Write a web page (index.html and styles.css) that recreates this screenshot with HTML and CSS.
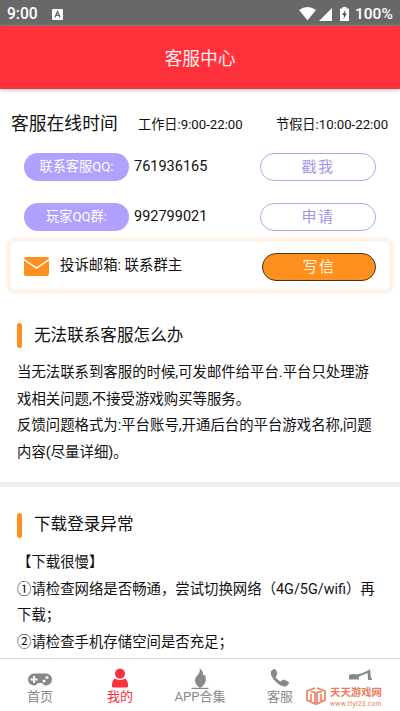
FILE: index.html
```html
<!DOCTYPE html>
<html lang="zh-CN">
<head>
<meta charset="utf-8">
<title>客服中心</title>
<link rel="stylesheet" href="styles.css">
</head>
<body>
<div class="app">
  <div class="status">
    <span class="clock">9:00</span>
    <svg class="ime" viewBox="0 0 11 11"><rect width="11" height="11" rx="1" fill="#fff"/><path d="M3 8.2 5.5 2.5 8 8.2M4 6.4h3" fill="none" stroke="#666" stroke-width="1.3"/></svg>
    <svg class="signals" viewBox="0 0 52 16"><path d="M0 4Q8.500-2 17 4L8.500 14.500Z" fill="#fff"/><path d="M33 2V15H20Z" fill="#fff"/><path d="M43.500 1h4v1.500h2.500V15h-9V2.500h2.500Z" fill="#fff"/><path d="m46.500 4-3.500 5h2l-.5 4 3.500-5.500h-2Z" fill="#555"/></svg>
    <span class="battery">100%</span>
  </div>
  <header class="header">客服中心</header>
  <main class="content">
    <div class="hours">
      <h1>客服在线时间</h1>
      <span class="weekday">工作日:9:00-22:00</span>
      <span>节假日:10:00-22:00</span>
    </div>
    <div class="contact">
      <span class="tag">联系客服QQ:</span><span class="number">761936165</span><button class="outline">戳我</button>
    </div>
    <div class="contact second">
      <span class="tag">玩家QQ群:</span><span class="number">992799021</span><button class="outline">申请</button>
    </div>
    <div class="mail">
      <svg class="envelope" viewBox="0 0 25 19"><rect width="25" height="19" rx="2" fill="#ff901f"/><path d="m0 2.500 12.500 8.500L25 2.500" fill="none" stroke="#fff" stroke-width="1.500"/></svg>
      <span class="mailtext">投诉邮箱: 联系群主</span><button class="write">写信</button>
    </div>
    <section class="faq">
      <h2><span>无法联系客服怎么办</span></h2>
      <p>当无法联系到客服的时候,可发邮件给平台.平台只处理游<br>戏相关问题,不接受游戏购买等服务。<br>反馈问题格式为:平台账号,开通后台的平台游戏名称,问题<br>内容(尽量详细)。</p>
    </section>
    <div class="divider"></div>
    <section class="faq login">
      <h2><span>下载登录异常</span></h2>
      <p>【下载很慢】<br>①请检查网络是否畅通，尝试切换网络（4G/5G/wifi）再<br>下载；<br>②请检查手机存储空间是否充足；</p>
    </section>
  </main>
  <nav class="tabs">
    <a class="tab"><svg viewBox="0 0 26 20"><path d="M7 4.500h12a6 6 0 0 1 0 12c-2 0-3-1.500-4-2.500h-4c-1 1-2 2.500-4 2.500a6 6 0 0 1 0-12Z" fill="#888"/><path d="M3.500 10.500h7M7 7v7" stroke="#fff" stroke-width="1.800"/><circle cx="17" cy="12" r="1.500" fill="#fff"/><circle cx="20" cy="8.500" r="1.500" fill="#fff"/></svg><span>首页</span></a>
    <a class="tab active"><svg viewBox="0 0 26 20"><circle cx="13" cy="4.800" r="5" fill="#fb303c"/><path d="M8 9.500q5 3 10 0 3 2 3 6V17q0 1.500-1.500 1.500h-13Q5 18.500 5 17v-1.500q0-4 3-6Z" fill="#fb303c"/></svg><span>我的</span></a>
    <a class="tab"><svg viewBox="0 0 26 20"><path d="M12.500-1q4.500 4 3.500 7.500l2-.5q2 6-1 9.500-1.500 2-4 3.500-5-3.500-5-7.500 0-3 3-6 2.500-3 1.500-6.500Z" fill="#888"/><path d="M4.500 19.400h17" stroke="#888" stroke-width="1.200"/></svg><span>APP合集</span></a>
    <a class="tab"><svg viewBox="0 0 26 20"><path d="m4 2 3-2q1-.5 2 1l1.500 4-2 3q2 3 5 4.500l3-2 4.500 2q1 .5 1 2L19 17.500q-5 .5-10.500-5Q3 7 4 2Z" fill="#888"/></svg><span>客服</span></a>
    <div class="tab brand">
      <svg class="tool" viewBox="0 0 26 12"><path d="M2 6q4-1.500 8-.5 6-1 11-4l2-1.500 1 9.500h1V11h-4V9.500l-.5-5.500-8.500 3.500v3H2Z" fill="#888"/></svg>
      <div class="watermark">
        <svg viewBox="0 0 20 18"><path d="M9 1 1 4v9l8 4V5.500L5 4.500M11 1l8 3v9l-8 4V5.500l5-1M5 7v7M15 7v7" fill="none" stroke="#ee7c5c" stroke-width="1.600"/></svg>
        <div><b>天天游戏网</b><small>www.ttyl23.com</small></div>
      </div>
    </div>
  </nav>
</div>
</body>
</html>
```
FILE: styles.css
```css
* { box-sizing: border-box; }
body { margin: 0; background: #fff; color: #111; font-family: Roboto, "Noto Sans CJK SC", sans-serif; }
.app { width: 400px; height: 711px; overflow: hidden; display: flex; flex-direction: column; }
.status { height: 26px; flex: none; background: #686868; color: #fff; display: flex; align-items: center; padding: 2px 7px 0; font-size: 15.6px; }
.clock { width: 45px; font-weight: 500; }
.ime { width: 11px; height: 11px; }
.signals { width: 52px; height: 16px; margin-left: auto; margin-right: 4px; }
.battery { width: 38px; font-size: 15.5px; white-space: nowrap; font-weight: 500; }
.header { height: 63px; flex: none; background: #ff323c; color: #ffeeed; text-align: center; font-size: 17.8px; line-height: 65px; box-shadow: 0 1px 4px #bbb; }
.content { flex: 1; min-height: 0; overflow: hidden; padding-top: 18px; }
.hours { display: flex; height: 29px; align-items: center; padding-left: 11px; font-size: 13.2px; white-space: nowrap; }
h1 { margin: 0; width: 127px; font-size: 17.8px; font-weight: 400; }
.weekday { width: 138px; }
.hours span { padding-top: 3px; }
.contact { display: flex; height: 28px; margin: 17px 24px 0; }
.second { margin-top: 22px; }
.tag { width: 105px; height: 28px; border-radius: 14px; background: #b1a0fc; color: #fff; text-align: center; font-size: 13.2px; line-height: 27px; }
.number { width: 131px; padding-left: 5px; font-size: 14.5px; line-height: 27px; }
button { padding: 0; font-family: inherit; height: 28px; border-radius: 14px; font-size: 15px; letter-spacing: 1.5px; line-height: 26px; }
.outline { width: 116px; border: 1px solid #b6a8ee; background: #fff; color: #a493ed; }
.mail { display: flex; align-items: center; height: 57px; margin: 6px 6px 0 6px; padding: 2px 13px 0; border: 5px solid #fff4e9; border-radius: 9px; }
.envelope { width: 25px; height: 19px; flex: none; }
.mailtext { width: 213px; flex: none; padding: 0 0 7px 11px; font-size: 14.4px; }
.write { width: 114px; flex: none; border: 1px solid #49351e; background: #ff901f; color: #fff1df; }
.faq { padding: 29px 17px 0; }
h2 { display: flex; align-items: center; height: 25px; margin: 0 0 12px; font-size: 16.6px; font-weight: 400; }
h2::before { content: ""; width: 5px; height: 25px; margin-right: 12px; border-radius: 3px; background: #ff901f; }
h2 span { padding-bottom: 4px; }
p { margin: 0; font-size: 14.4px; line-height: 26.7px; white-space: nowrap; }
.divider { height: 5px; margin-top: 15px; background: #f0f0f0; }
.login { padding-top: 26px; }
.tabs { height: 53px; flex: none; display: grid; grid-template-columns: repeat(5, 80px); background: #fff; border-top: 1px solid #dcdcdc; }
.tab { display: flex; flex-direction: column; align-items: center; padding-top: 10px; color: #888; font-size: 13px; line-height: 15px; }
.tab > svg { width: 26px; height: 20px; flex: none; overflow: visible; }
.active { color: #fb303c; }
.brand .tool { height: 12px; }
.watermark { display: flex; gap: 4px; margin: 6px 32px 0 0; color: #ee7c5c; }
.watermark svg { width: 20px; height: 18px; flex: none; }
.watermark b { display: block; font-size: 10.4px; line-height: 11px; font-weight: 700; white-space: nowrap; }
.watermark small { display: block; margin-top: 2px; font-size: 6.8px; letter-spacing: 0.2px; line-height: 8px; white-space: nowrap; }
```
